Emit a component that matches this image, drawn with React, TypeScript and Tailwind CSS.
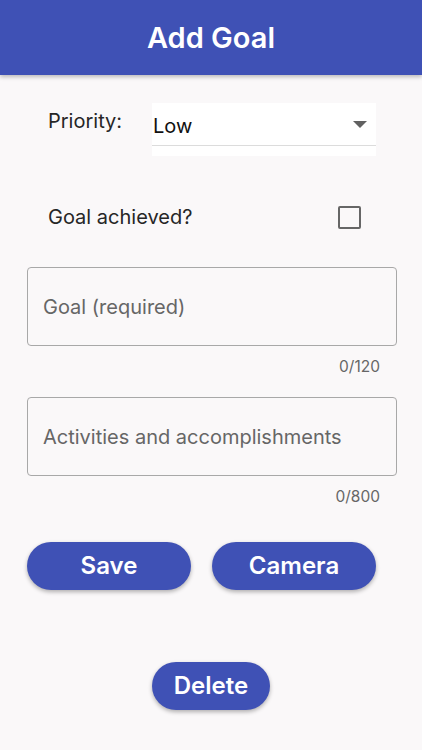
import React from "react";

export default function App() {
  return (
    <div className="w-[422px] h-[750px] bg-[#faf8f9] flex flex-col overflow-hidden" style={{ fontFamily: "Inter, 'Noto Sans', sans-serif" }}>
      <div className="h-[75px] bg-[#3f51b5] flex items-center justify-center shadow-[0_2px_4px_rgba(0,0,0,0.25)] relative z-10">
        <span className="text-white text-[29px] font-semibold leading-[36px] pt-[1px]">Add Goal</span>
      </div>
      <div className="flex flex-col">
        <div className="flex mt-[28px] pl-[48px]">
          <div className="w-[104px] pt-[4px] text-[20px] leading-[28px] text-[#262626]">Priority:</div>
          <div className="w-[224px] h-[53px] bg-white flex flex-col">
            <div className="h-[43px] flex items-center justify-between border-b border-[#dcdcdc]">
              <span className="text-[20px] leading-[28px] text-[#111] pl-[1px] pt-[3px]">Low</span>
              <svg width="14" height="8" viewBox="0 0 14 8" className="mr-[9px] mt-[1px]">
                <path d="M0 0 L14 0 L7 7 Z" fill="#616161" />
              </svg>
            </div>
          </div>
        </div>
        <div className="flex items-center justify-between pl-[48px] pr-[61px] mt-[47px]">
          <span className="text-[20px] leading-[28px] text-[#262626]">Goal achieved?</span>
          <div className="w-[23px] h-[23px] border-2 border-[#666] rounded-[2px]" />
        </div>
        <div className="ml-[27px] w-[370px] mt-[36px] h-[79px] border border-[#a8a8a8] rounded-[4px] flex items-center px-[15px]">
          <span className="text-[20px] leading-[28px] text-[#666]">Goal (required)</span>
        </div>
        <div className="text-right pr-[42px] mt-[11px] text-[15.5px] text-[#666] leading-[20px]">0/120</div>
        <div className="ml-[27px] w-[370px] mt-[20px] h-[79px] border border-[#a8a8a8] rounded-[4px] flex items-center px-[15px]">
          <span className="text-[20px] leading-[28px] text-[#666]">Activities and accomplishments</span>
        </div>
        <div className="text-right pr-[42px] mt-[11px] text-[15.5px] text-[#666] leading-[20px]">0/800</div>
        <div className="flex pl-[27px] gap-[21px] mt-[35px]">
          <button className="w-[164px] h-[48px] rounded-full bg-[#3f51b5] text-white text-[24px] font-semibold shadow-[0_2px_4px_rgba(0,0,0,0.3)]">Save</button>
          <button className="w-[164px] h-[48px] rounded-full bg-[#3f51b5] text-white text-[24px] font-semibold shadow-[0_2px_4px_rgba(0,0,0,0.3)]">Camera</button>
        </div>
        <div className="flex justify-center mt-[72px]">
          <button className="w-[118px] h-[48px] rounded-full bg-[#3f51b5] text-white text-[24px] font-semibold shadow-[0_2px_4px_rgba(0,0,0,0.3)]">Delete</button>
        </div>
      </div>
    </div>
  );
}
